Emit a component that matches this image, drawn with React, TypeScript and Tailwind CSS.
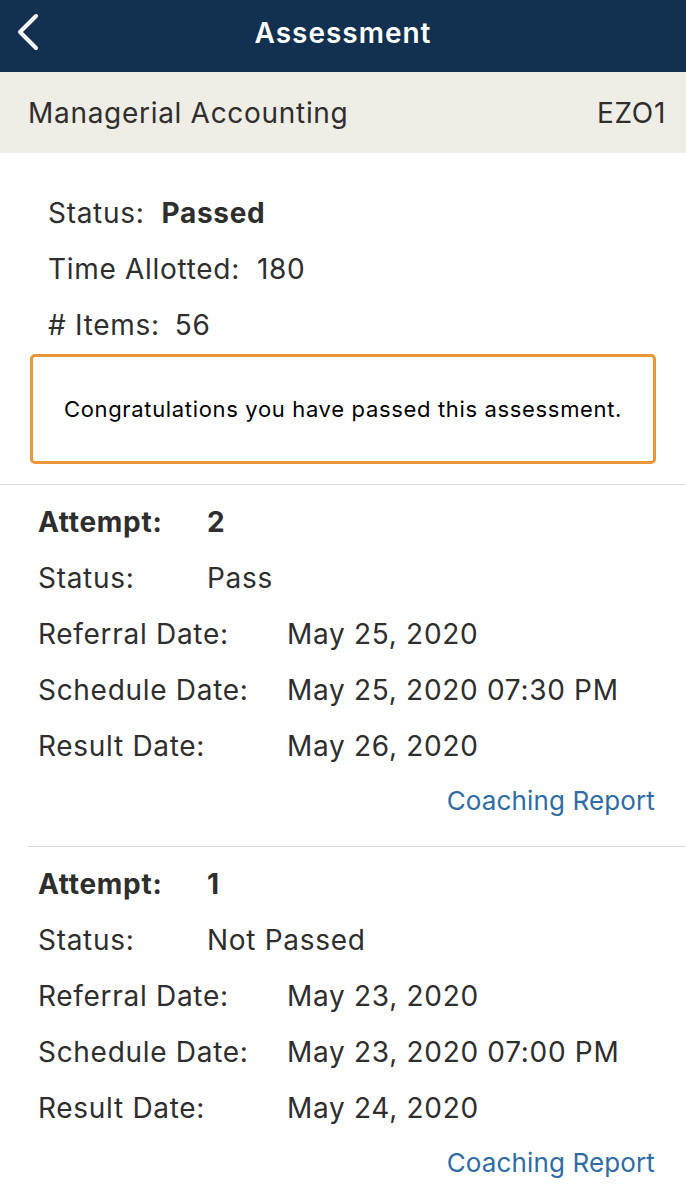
type Attempt = {
  number: number;
  status: string;
  referral: string;
  schedule: string;
  result: string;
};

const attempts: Attempt[] = [
  {
    number: 2,
    status: "Pass",
    referral: "May 25, 2020",
    schedule: "May 25, 2020 07:30 PM",
    result: "May 26, 2020",
  },
  {
    number: 1,
    status: "Not Passed",
    referral: "May 23, 2020",
    schedule: "May 23, 2020 07:00 PM",
    result: "May 24, 2020",
  },
];

function DateRow({ label, value }: { label: string; value: string }) {
  return (
    <div className="flex h-14 items-center">
      <span className="w-[249px] shrink-0">{label}</span>
      <span>{value}</span>
    </div>
  );
}

function AttemptBlock({ attempt, inset }: { attempt: Attempt; inset: boolean }) {
  return (
    <section
      className={[
        "border-t border-[#dcdcdc] pt-[9px] pb-5",
        inset ? "ml-7 pl-[10px]" : "pl-[38px]",
      ].join(" ")}
    >
      <div className="flex h-14 items-center font-bold">
        <span className="w-[169px] shrink-0">Attempt:</span>
        <span>{attempt.number}</span>
      </div>
      <div className="flex h-14 items-center">
        <span className="w-[169px] shrink-0">Status:</span>
        <span>{attempt.status}</span>
      </div>
      <DateRow label="Referral Date:" value={attempt.referral} />
      <DateRow label="Schedule Date:" value={attempt.schedule} />
      <DateRow label="Result Date:" value={attempt.result} />
      <div className="flex h-[52px] items-center justify-end pr-[31px] text-[26px] tracking-[0.005em] text-[#2f6ca3]">
        Coaching Report
      </div>
    </section>
  );
}

export default function App() {
  return (
    <div className="min-h-[1200px] w-[686px] bg-white font-['Inter',sans-serif] text-[28px] tracking-[0.025em] text-[#2e2e2e]">
      <header className="relative flex h-[72px] items-center justify-center bg-[#12304f] pb-[6px]">
        {/* back chevron */}
        <svg
          className="absolute left-0 top-0 h-[64px] w-[56px]"
          viewBox="0 0 56 64"
          fill="none"
          stroke="white"
          strokeWidth={4}
          strokeLinecap="round"
          strokeLinejoin="round"
        >
          <polyline points="36,16 20,32 36,48" />
        </svg>
        <h1 className="text-[28px] font-semibold tracking-[0.035em] text-white">Assessment</h1>
      </header>

      <div className="flex h-[81px] items-center justify-between bg-[#eeede6] pl-[28px] pr-[20px]">
        <span>Managerial Accounting</span>
        <span>EZO1</span>
      </div>

      <div className="pt-8 pl-12">
        <div className="flex h-14 items-center gap-[17px]">
          <span>Status:</span>
          <span className="font-bold">Passed</span>
        </div>
        <div className="flex h-14 items-center gap-[17px]">
          <span>Time Allotted:</span>
          <span>180</span>
        </div>
        <div className="flex h-14 items-center gap-[15px]">
          <span># Items:</span>
          <span>56</span>
        </div>
      </div>

      <div className="mx-[30px] mt-px flex h-[110px] items-center justify-center rounded-[5px] border-[3px] border-[#e9973a] text-[22px] tracking-[0.03em] text-black">
        Congratulations you have passed this assessment.
      </div>

      <div className="mt-5">
        {attempts.map((a, i) => (
          <AttemptBlock key={a.number} attempt={a} inset={i > 0} />
        ))}
      </div>
    </div>
  );
}
